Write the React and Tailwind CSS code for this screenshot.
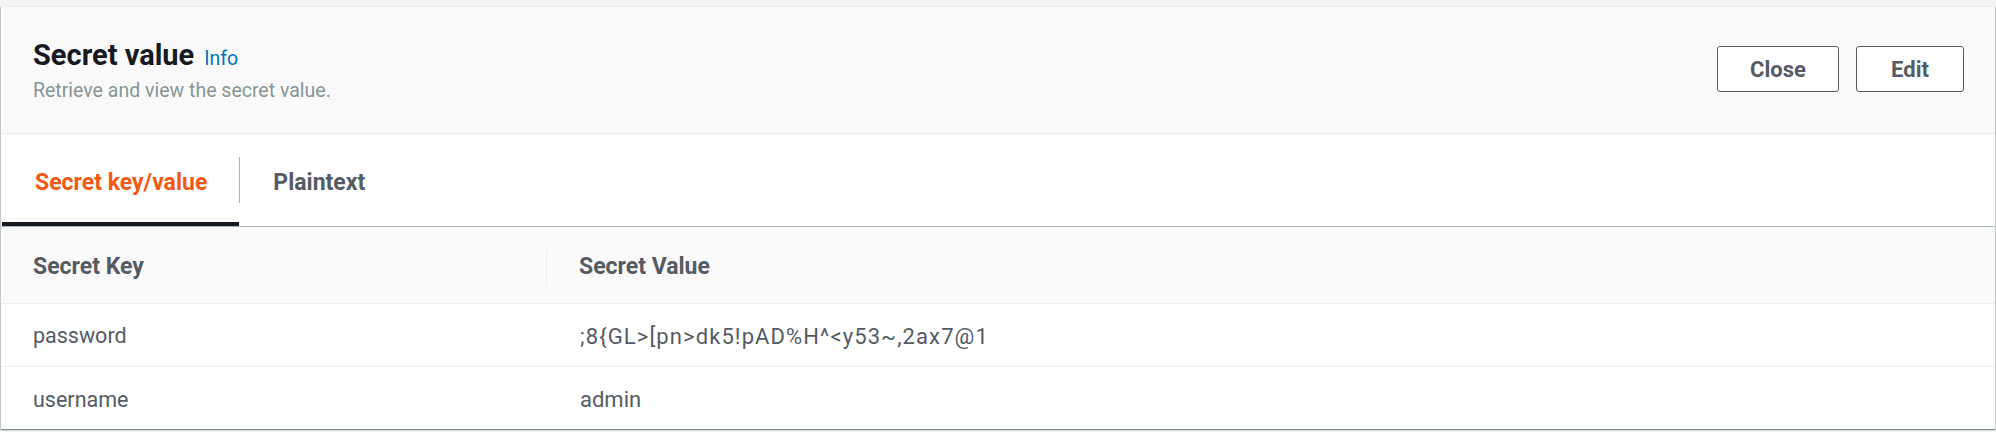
import React, { useState } from 'react';

const rows = [
  { key: 'password', value: ';8{GL>[pn>dk5!pAD%H^<y53~,2ax7@1' },
  { key: 'username', value: 'admin' },
];

const font = { fontFamily: 'Roboto, "Noto Sans", Arial, sans-serif' };

const App = () => {
  const [tab, setTab] = useState('kv');

  return (
    <div className="min-h-[432px] bg-[#f2f3f3] pt-[6px]" style={font}>
      <div className="bg-white border-t border-[#eaeded] shadow-[0_1px_1px_0_rgba(0,28,36,0.3),1px_1px_1px_0_rgba(0,28,36,0.15),-1px_1px_1px_0_rgba(0,28,36,0.15)] mx-[1px]">
        {/* header */}
        <div className="h-[127px] bg-[#fafafa] border-b border-[#eaeded] flex items-center justify-between pl-[32px] pr-[31px]">
          <div className="flex flex-col gap-[4px] mt-[2px]">
            <div className="flex items-baseline gap-[10px]">
              <h2 className="text-[29px] leading-[34px] font-bold text-[#16191f]">Secret value</h2>
              <a className="text-[19.5px] text-[#0073bb] cursor-pointer">Info</a>
            </div>
            <p className="text-[19.5px] leading-[26px] text-[#879596]">Retrieve and view the secret value.</p>
          </div>
          <div className="flex gap-[17px] -mt-[2px]">
            <button className="w-[122px] h-[46px] border border-[#545b64] rounded-[3px] bg-white text-[22px] font-bold text-[#545b64]">
              Close
            </button>
            <button className="w-[108px] h-[46px] border border-[#545b64] rounded-[3px] bg-white text-[22px] font-bold text-[#545b64]">
              Edit
            </button>
          </div>
        </div>

        {/* tabs */}
        <div className="flex items-stretch border-b border-[#aab7b8] h-[93px]">
          <button
            onClick={() => setTab('kv')}
            className={`ml-[1px] pl-[33px] pr-[32px] pt-[11px] text-[23px] font-bold border-b-[4px] ${
              tab === 'kv' ? 'text-[#f25a14] border-[#16191f]' : 'text-[#545b64] border-transparent'
            }`}
          >
            Secret key/value
          </button>
          <div className="w-px h-[46px] bg-[#aab7b8] self-center" />
          <button
            onClick={() => setTab('plain')}
            className={`pl-[33px] pr-[32px] pt-[11px] text-[23px] font-bold border-b-[4px] ${
              tab === 'plain' ? 'text-[#f25a14] border-[#16191f]' : 'text-[#545b64] border-transparent'
            }`}
          >
            Plaintext
          </button>
        </div>

        {/* table */}
        <table className="w-full text-left">
          <thead className="bg-[#fafafa]">
            <tr className="h-[76px] border-b border-[#eaeded]">
              <th className="w-[546px] pl-[32px] pt-[4px] text-[23px] font-bold text-[#545b64]">
                <div className="flex items-center justify-between h-[36px]">
                  <span>Secret Key</span>
                  <span className="w-px h-[36px] bg-[#eaeded]" />
                </div>
              </th>
              <th className="pl-[32px] pt-[4px] text-[23px] font-bold text-[#545b64]">Secret Value</th>
            </tr>
          </thead>
          <tbody>
            {rows.map((r, i) => (
              <tr key={r.key} className={`h-[63px] ${i < rows.length - 1 ? 'border-b border-[#eaeded]' : ''}`}>
                <td className="pl-[32px] pt-[4px] text-[21.5px] text-[#545b64]">{r.key}</td>
                <td className={`pl-[33px] pt-[4px] text-[22px] text-[#545b64] ${i === 0 ? 'tracking-[1.1px]' : ''}`}>{r.value}</td>
              </tr>
            ))}
          </tbody>
        </table>
      </div>
    </div>
  );
};

export default App;
